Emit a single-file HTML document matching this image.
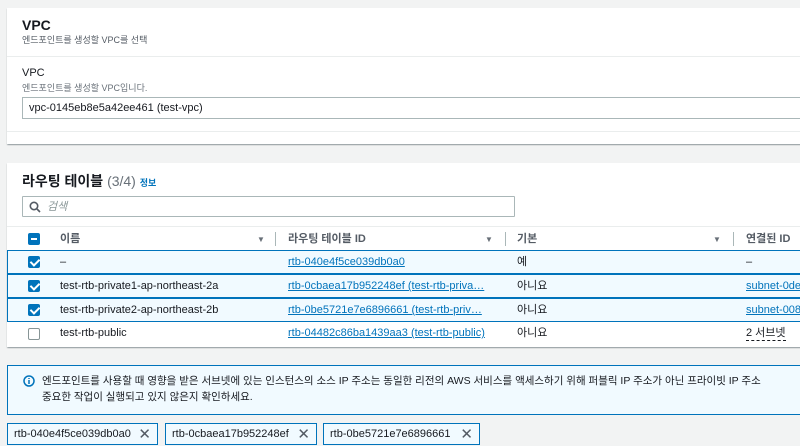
<!DOCTYPE html>
<html><head><meta charset="utf-8"><style>
*{box-sizing:border-box;margin:0;padding:0}
body{width:800px;height:446px;overflow:hidden;background:#f2f3f3;font-family:"Liberation Sans","Noto Sans CJK KR",sans-serif;color:#16191f;font-size:11px;line-height:14px;position:relative}
.abs{position:absolute}
.card{position:absolute;left:7px;width:800px;background:#fff;box-shadow:0 1px 1px rgba(0,28,36,.3),1px 1px 1px rgba(0,28,36,.15)}
a{color:#0073bb;text-decoration:underline}
.cb{position:absolute;left:21px;width:12px;height:12px;border-radius:2px}
.on{background:#0073bb}
.chk::after{content:"";position:absolute;left:3.5px;top:1px;width:4px;height:7px;border:solid #fff;border-width:0 2px 2px 0;transform:rotate(45deg)}
.off{border:1px solid #879596;background:#fff}
.row{position:absolute;left:0;width:800px;height:24px}
.sel{background:#f1faff;border-top:1px solid #0073bb;border-bottom:1px solid #0073bb;border-left:1px solid #0073bb}
.row span{position:absolute;top:4px;white-space:nowrap}
.tok{position:absolute;top:423px;height:22px;border:1px solid #0073bb;background:#f1faff;padding:3px 0 0 6px;font-size:11px}
.tok b{position:absolute;right:6px;top:4px;font-weight:normal;font-size:15px;color:#545b64}
</style></head><body>
<div class="card" style="top:8px;height:136px">
 <div class="abs" style="left:15px;top:8px;font-size:14px;font-weight:bold;line-height:18px">VPC</div>
 <div class="abs" style="left:15px;top:26px;font-size:9px;color:#545b64;line-height:12px">엔드포인트를 생성할 VPC를 선택</div>
 <div class="abs" style="left:0;top:48px;width:800px;border-top:1px solid #eaeded"></div>
 <div class="abs" style="left:15px;top:58px;font-size:11px">VPC</div>
 <div class="abs" style="left:15px;top:74px;font-size:9px;color:#687078;line-height:12px">엔드포인트를 생성할 VPC입니다.</div>
 <div class="abs" style="left:15px;top:89px;width:790px;height:22px;border:1px solid #aab7b8;padding:3px 0 0 6px;font-size:11px">vpc-0145eb8e5a42ee461 (test-vpc)</div>
 <div class="abs" style="left:0;top:123px;width:800px;border-top:1px solid #eaeded"></div>
</div>
<div class="card" style="top:163px;height:184px">
 <div class="abs" style="left:15px;top:9px;font-size:14px;font-weight:bold;line-height:18px">라우팅 테이블 <span style="font-weight:normal;color:#687078">(3/4)</span> <span style="font-size:9px;color:#0073bb">정보</span></div>
 <div class="abs" style="left:15px;top:33px;width:493px;height:21px;border:1px solid #aab7b8;border-radius:1px">
  <svg class="abs" style="left:6px;top:4px" width="12" height="12" viewBox="0 0 12 12"><circle cx="5" cy="5" r="3.7" fill="none" stroke="#545b64" stroke-width="1.6"/><path d="M8 8l3 3" stroke="#545b64" stroke-width="1.6"/></svg>
  <span class="abs" style="left:24px;top:3px;color:#879596;font-style:italic">검색</span></div>
 <div class="row" style="top:63px;height:24px;border-top:1px solid #eaeded">
  <div class="cb on" style="top:6px"></div>
  <div class="abs" style="left:24px;top:11px;width:6px;height:2px;background:#fff"></div>
  <span style="left:53px;color:#545b64;font-weight:bold;top:5px">이름</span><span style="left:250px;font-size:8px;color:#687078;top:6px">▼</span><div class="abs" style="left:268px;top:5px;height:14px;border-left:1px solid #aab7b8"></div>
  <span style="left:281px;color:#545b64;font-weight:bold;top:5px">라우팅 테이블 ID</span><span style="left:478px;font-size:8px;color:#687078;top:6px">▼</span><div class="abs" style="left:498px;top:5px;height:14px;border-left:1px solid #aab7b8"></div>
  <span style="left:510px;color:#545b64;font-weight:bold;top:5px">기본</span><span style="left:706px;font-size:8px;color:#687078;top:6px">▼</span><div class="abs" style="left:726px;top:5px;height:14px;border-left:1px solid #aab7b8"></div>
  <span style="left:739px;color:#545b64;font-weight:bold;top:5px">연결된 ID</span>
 </div>
 <div class="row sel" style="top:87px"><div class="cb on chk" style="top:5px;left:20px"></div><span style="left:52px">–</span><span style="left:280px"><a>rtb-040e4f5ce039db0a0</a></span><span style="left:509px">예</span><span style="left:738px">–</span></div>
 <div class="row sel" style="top:111px"><div class="cb on chk" style="top:5px;left:20px"></div><span style="left:52px">test-rtb-private1-ap-northeast-2a</span><span style="left:280px"><a>rtb-0cbaea17b952248ef (test-rtb-priva…</a></span><span style="left:509px">아니요</span><span style="left:738px"><a>subnet-0de</a></span></div>
 <div class="row sel" style="top:135px"><div class="cb on chk" style="top:5px;left:20px"></div><span style="left:52px">test-rtb-private2-ap-northeast-2b</span><span style="left:280px"><a>rtb-0be5721e7e6896661 (test-rtb-priv…</a></span><span style="left:509px">아니요</span><span style="left:738px"><a>subnet-008</a></span></div>
 <div class="row" style="top:159px"><div class="cb off" style="top:6px"></div><span style="left:53px">test-rtb-public</span><span style="left:281px"><a>rtb-04482c86ba1439aa3 (test-rtb-public)</a></span><span style="left:510px">아니요</span><span style="left:739px;border-bottom:1px dashed #16191f">2 서브넷</span></div>
</div>
<div class="abs" style="left:7px;top:365px;width:800px;height:50px;background:#f1faff;border:1px solid #0073bb;font-size:10.5px;line-height:16px;padding:7px 0 0 34px">
 <svg class="abs" style="left:15px;top:9px" width="12" height="12" viewBox="0 0 12 12"><circle cx="6" cy="6" r="5" fill="none" stroke="#0073bb" stroke-width="1.5"/><path d="M6 5v4M6 3v1" stroke="#0073bb" stroke-width="1.5"/></svg>
 <div style="white-space:nowrap">엔드포인트를 사용할 때 영향을 받은 서브넷에 있는 인스턴스의 소스 IP 주소는 동일한 리전의 AWS 서비스를 액세스하기 위해 퍼블릭 IP 주소가 아닌 프라이빗 IP 주소</div>
 <div>중요한 작업이 실행되고 있지 않은지 확인하세요.</div>
</div>
<div class="tok" style="left:7px;width:151px">rtb-040e4f5ce039db0a0<b>✕</b></div>
<div class="tok" style="left:165px;width:152px">rtb-0cbaea17b952248ef<b>✕</b></div>
<div class="tok" style="left:323px;width:157px">rtb-0be5721e7e6896661<b>✕</b></div>
</body></html>
